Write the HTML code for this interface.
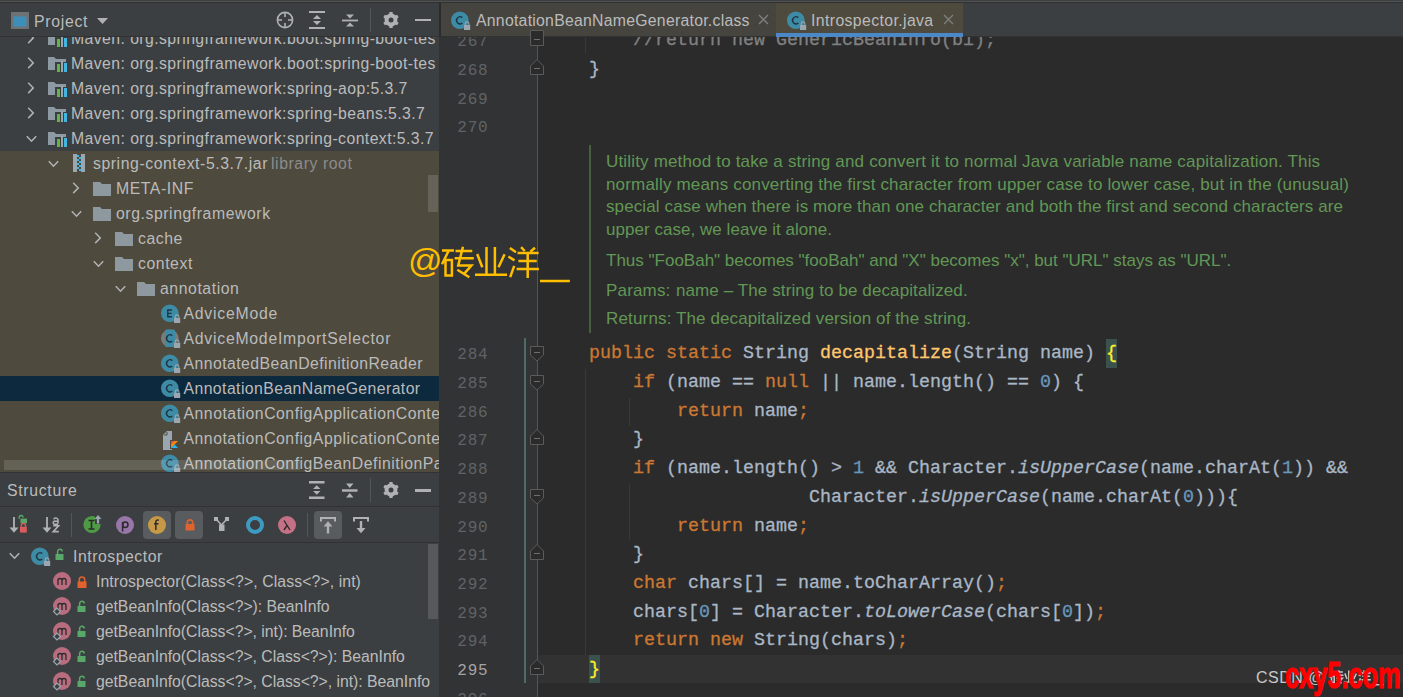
<!DOCTYPE html><html><head><meta charset="utf-8"><style>
*{box-sizing:border-box}
html,body{margin:0;padding:0;width:1403px;height:697px;overflow:hidden;background:#2b2b2b}
body{position:relative;font-family:"Liberation Sans",sans-serif}
.a{position:absolute}
.ui{position:absolute;font-size:15.8px;letter-spacing:0.42px;color:#bbbbbb;white-space:pre;line-height:25px;height:25px}
.code{position:absolute;left:545px;font-family:"Liberation Mono",monospace;font-size:18.333px;-webkit-text-stroke:0.3px currentColor;line-height:28.7px;height:28.7px;white-space:pre;color:#a9b7c6}
.ln{position:absolute;left:441px;width:47.5px;text-align:right;font-family:"Liberation Mono",monospace;font-size:16px;letter-spacing:0.8px;line-height:28.7px;height:28.7px;color:#606366;white-space:pre}
.k{color:#cc7832}.n{color:#6897bb}.f{color:#ffc66d}.i{font-style:italic}
.doc{position:absolute;left:606px;font-size:17px;letter-spacing:0.17px;color:#629755;white-space:pre;line-height:22.6px}
svg{position:absolute;overflow:visible}
</style></head><body><div class="a" style="left:0px;top:0px;width:1403px;height:1px;background:#3c3f41;"></div>
<div class="a" style="left:0px;top:1px;width:1403px;height:1px;background:#525252;"></div>
<div class="a" style="left:0px;top:2px;width:1403px;height:1px;background:#2f3030;"></div>
<div class="a" style="left:0px;top:3px;width:439px;height:469px;background:#3c3f41;"></div>
<div class="a" style="left:0px;top:151px;width:439px;height:321px;background:#4e4a3e;"></div>
<div class="a" style="left:0px;top:376px;width:439px;height:25px;background:#0d293e;"></div>
<div class="a" style="left:0;top:37px;width:439px;height:435px;overflow:hidden">
<svg style="left:27.3px;top:-4.8px" width="8" height="12"><path d="M1.2 0.7 L6.3 5.9 L1.2 11.1" fill="none" stroke="#afb1b3" stroke-width="1.5"/></svg>
<svg style="left:48px;top:-6px" width="20" height="16"><path d="M0 1h6l2 2h10v11H0z" fill="#8e9aa3"/><rect x="7" y="6" width="12" height="10" fill="#3c3f41"/><rect x="9" y="8" width="3" height="8" fill="#62b543"/><rect x="13" y="5" width="2" height="11" fill="#9aa7b0"/><rect x="16" y="7" width="3" height="9" fill="#40b6e0"/></svg>
<div class="ui" style="left:71px;top:-11px;letter-spacing:0.42px">Maven: org.springframework.boot:spring-boot-tes</div>
<svg style="left:27.3px;top:20.2px" width="8" height="12"><path d="M1.2 0.7 L6.3 5.9 L1.2 11.1" fill="none" stroke="#afb1b3" stroke-width="1.5"/></svg>
<svg style="left:48px;top:19px" width="20" height="16"><path d="M0 1h6l2 2h10v11H0z" fill="#8e9aa3"/><rect x="7" y="6" width="12" height="10" fill="#3c3f41"/><rect x="9" y="8" width="3" height="8" fill="#62b543"/><rect x="13" y="5" width="2" height="11" fill="#9aa7b0"/><rect x="16" y="7" width="3" height="9" fill="#40b6e0"/></svg>
<div class="ui" style="left:71px;top:14px;letter-spacing:0.42px">Maven: org.springframework.boot:spring-boot-tes</div>
<svg style="left:27.3px;top:45.2px" width="8" height="12"><path d="M1.2 0.7 L6.3 5.9 L1.2 11.1" fill="none" stroke="#afb1b3" stroke-width="1.5"/></svg>
<svg style="left:48px;top:44px" width="20" height="16"><path d="M0 1h6l2 2h10v11H0z" fill="#8e9aa3"/><rect x="7" y="6" width="12" height="10" fill="#3c3f41"/><rect x="9" y="8" width="3" height="8" fill="#62b543"/><rect x="13" y="5" width="2" height="11" fill="#9aa7b0"/><rect x="16" y="7" width="3" height="9" fill="#40b6e0"/></svg>
<div class="ui" style="left:71px;top:39px;letter-spacing:0.42px">Maven: org.springframework:spring-aop:5.3.7</div>
<svg style="left:27.3px;top:70.2px" width="8" height="12"><path d="M1.2 0.7 L6.3 5.9 L1.2 11.1" fill="none" stroke="#afb1b3" stroke-width="1.5"/></svg>
<svg style="left:48px;top:69px" width="20" height="16"><path d="M0 1h6l2 2h10v11H0z" fill="#8e9aa3"/><rect x="7" y="6" width="12" height="10" fill="#3c3f41"/><rect x="9" y="8" width="3" height="8" fill="#62b543"/><rect x="13" y="5" width="2" height="11" fill="#9aa7b0"/><rect x="16" y="7" width="3" height="9" fill="#40b6e0"/></svg>
<div class="ui" style="left:71px;top:64px;letter-spacing:0.42px">Maven: org.springframework:spring-beans:5.3.7</div>
<svg style="left:26px;top:98px" width="12" height="8"><path d="M0.8 1.2 L5.5 6.2 L10.2 1.2" fill="none" stroke="#afb1b3" stroke-width="1.6"/></svg>
<svg style="left:48px;top:94px" width="20" height="16"><path d="M0 1h6l2 2h10v11H0z" fill="#8e9aa3"/><rect x="7" y="6" width="12" height="10" fill="#3c3f41"/><rect x="9" y="8" width="3" height="8" fill="#62b543"/><rect x="13" y="5" width="2" height="11" fill="#9aa7b0"/><rect x="16" y="7" width="3" height="9" fill="#40b6e0"/></svg>
<div class="ui" style="left:71px;top:89px;letter-spacing:0.42px">Maven: org.springframework:spring-context:5.3.7</div>
<svg style="left:48px;top:123px" width="12" height="8"><path d="M0.8 1.2 L5.5 6.2 L10.2 1.2" fill="none" stroke="#afb1b3" stroke-width="1.6"/></svg>
<svg style="left:72px;top:117px" width="14" height="18"><rect x="1" y="0" width="12" height="18" fill="#9aa7b0"/><rect x="5" y="0" width="4" height="18" fill="#4e4a3e"/><path d="M5 1h2v2H5zM7 3h2v2H7zM5 5h2v2H5zM7 7h2v2H7zM5 9h2v2H5zM7 11h2v2H7zM5 13h2v2H5zM7 15h2v2H7z" fill="#40b6e0"/></svg>
<div class="ui" style="left:93px;top:114px;letter-spacing:0.56px">spring-context-5.3.7.jar</div>
<div class="ui" style="left:271px;top:114px;color:#8c8c8c;letter-spacing:0.56px">library root</div>
<svg style="left:72.3px;top:145.2px" width="8" height="12"><path d="M1.2 0.7 L6.3 5.9 L1.2 11.1" fill="none" stroke="#afb1b3" stroke-width="1.5"/></svg>
<svg style="left:93px;top:144px" width="18" height="15"><path d="M0 1h7l2 2h9v12H0z" fill="#9aa7b0" opacity="0.85"/></svg>
<div class="ui" style="left:116px;top:139px;letter-spacing:0.56px">META-INF</div>
<svg style="left:71px;top:173px" width="12" height="8"><path d="M0.8 1.2 L5.5 6.2 L10.2 1.2" fill="none" stroke="#afb1b3" stroke-width="1.6"/></svg>
<svg style="left:93px;top:169px" width="18" height="15"><path d="M0 1h7l2 2h9v12H0z" fill="#9aa7b0" opacity="0.85"/></svg>
<div class="ui" style="left:116px;top:164px;letter-spacing:0.56px">org.springframework</div>
<svg style="left:94.3px;top:195.2px" width="8" height="12"><path d="M1.2 0.7 L6.3 5.9 L1.2 11.1" fill="none" stroke="#afb1b3" stroke-width="1.5"/></svg>
<svg style="left:115px;top:194px" width="18" height="15"><path d="M0 1h7l2 2h9v12H0z" fill="#9aa7b0" opacity="0.85"/></svg>
<div class="ui" style="left:138px;top:189px;letter-spacing:0.56px">cache</div>
<svg style="left:93px;top:223px" width="12" height="8"><path d="M0.8 1.2 L5.5 6.2 L10.2 1.2" fill="none" stroke="#afb1b3" stroke-width="1.6"/></svg>
<svg style="left:115px;top:219px" width="18" height="15"><path d="M0 1h7l2 2h9v12H0z" fill="#9aa7b0" opacity="0.85"/></svg>
<div class="ui" style="left:138px;top:214px;letter-spacing:0.56px">context</div>
<svg style="left:115px;top:248px" width="12" height="8"><path d="M0.8 1.2 L5.5 6.2 L10.2 1.2" fill="none" stroke="#afb1b3" stroke-width="1.6"/></svg>
<svg style="left:137px;top:244px" width="18" height="15"><path d="M0 1h7l2 2h9v12H0z" fill="#9aa7b0" opacity="0.85"/></svg>
<div class="ui" style="left:160px;top:239px;letter-spacing:0.56px">annotation</div>
<svg style="left:161px;top:267px" width="22" height="20"><circle cx="8.8" cy="9.3" r="8.8" fill="#3e8ba6"/><path d="M11 6H6.8v6.8H11M6.8 9.4h3.8" fill="none" stroke="#1e3542" stroke-width="1.4"/><rect x="13" y="14" width="6.2" height="5" fill="#9aa7b0"/><path d="M14.3 14v-1.3a1.8 1.8 0 0 1 3.6 0V14" fill="none" stroke="#9aa7b0" stroke-width="1.1"/></svg>
<div class="ui" style="left:183.5px;top:264px;letter-spacing:0.76px">AdviceMode</div>
<svg style="left:161px;top:292px" width="22" height="20"><circle cx="8.8" cy="9.3" r="8.8" fill="#8a8d8f" opacity="0.75"/><rect x="4" y="0.5" width="10" height="17.6" rx="1.5" fill="#3e8ba6"/><path d="M11.3 6.6 A3.5 3.5 0 1 0 11.3 12" fill="none" stroke="#1e3542" stroke-width="1.4"/><rect x="13" y="14" width="6.2" height="5" fill="#9aa7b0"/><path d="M14.3 14v-1.3a1.8 1.8 0 0 1 3.6 0V14" fill="none" stroke="#9aa7b0" stroke-width="1.1"/></svg>
<div class="ui" style="left:183.5px;top:289px;letter-spacing:0.75px">AdviceModeImportSelector</div>
<svg style="left:161px;top:317px" width="22" height="20"><circle cx="8.8" cy="9.3" r="8.8" fill="#3e8ba6"/><path d="M11.3 6.6 A3.5 3.5 0 1 0 11.3 12" fill="none" stroke="#1e3542" stroke-width="1.4"/><rect x="13" y="14" width="6.2" height="5" fill="#9aa7b0"/><path d="M14.3 14v-1.3a1.8 1.8 0 0 1 3.6 0V14" fill="none" stroke="#9aa7b0" stroke-width="1.1"/></svg>
<div class="ui" style="left:183.5px;top:314px;letter-spacing:0.44px">AnnotatedBeanDefinitionReader</div>
<svg style="left:161px;top:342px" width="22" height="20"><circle cx="8.8" cy="9.3" r="8.8" fill="#3e8ba6"/><path d="M11.3 6.6 A3.5 3.5 0 1 0 11.3 12" fill="none" stroke="#1e3542" stroke-width="1.4"/><rect x="13" y="14" width="6.2" height="5" fill="#9aa7b0"/><path d="M14.3 14v-1.3a1.8 1.8 0 0 1 3.6 0V14" fill="none" stroke="#9aa7b0" stroke-width="1.1"/></svg>
<div class="ui" style="left:183.5px;top:339px;letter-spacing:0.42px">AnnotationBeanNameGenerator</div>
<svg style="left:161px;top:367px" width="22" height="20"><circle cx="8.8" cy="9.3" r="8.8" fill="#3e8ba6"/><path d="M11.3 6.6 A3.5 3.5 0 1 0 11.3 12" fill="none" stroke="#1e3542" stroke-width="1.4"/><rect x="13" y="14" width="6.2" height="5" fill="#9aa7b0"/><path d="M14.3 14v-1.3a1.8 1.8 0 0 1 3.6 0V14" fill="none" stroke="#9aa7b0" stroke-width="1.1"/></svg>
<div class="ui" style="left:183.5px;top:364px;letter-spacing:0.51px">AnnotationConfigApplicationConte</div>
<svg style="left:163px;top:394px" width="17" height="19"><path d="M0 4l4-4h5v19H0z" fill="#9aa7b0"/><path d="M1 4h3V1" fill="none" stroke="#4e4a3e" stroke-width="1"/><path d="M7 9h9l-4.5 4.5L16 18H7z" fill="#4e4a3e"/><path d="M8 10h7l-7 7z" fill="#f88909"/><path d="M8 17l3.5-3.5L15 17z" fill="#29b6f6"/><path d="M8 10h3.5L8 13.5z" fill="#e44857"/></svg>
<div class="ui" style="left:183.5px;top:389px;letter-spacing:0.51px">AnnotationConfigApplicationConte</div>
<svg style="left:161px;top:417px" width="22" height="20"><circle cx="8.8" cy="9.3" r="8.8" fill="#3e8ba6"/><path d="M11.3 6.6 A3.5 3.5 0 1 0 11.3 12" fill="none" stroke="#1e3542" stroke-width="1.4"/><rect x="13" y="14" width="6.2" height="5" fill="#9aa7b0"/><path d="M14.3 14v-1.3a1.8 1.8 0 0 1 3.6 0V14" fill="none" stroke="#9aa7b0" stroke-width="1.1"/></svg>
<div class="ui" style="left:183.5px;top:414px;letter-spacing:0.51px">AnnotationConfigBeanDefinitionPar</div>
<div class="a" style="left:4px;top:423px;width:296px;height:10px;background:rgba(255,255,255,0.13)"></div>
<div class="a" style="left:428px;top:138px;width:10px;height:37px;background:#65625a"></div>
</div>
<div class="a" style="left:0px;top:3px;width:439px;height:33px;background:#3c3f41;"></div>
<div class="a" style="left:0px;top:36px;width:439px;height:1px;background:#323232;"></div>
<svg style="left:11px;top:12px" width="18" height="17"><rect x="0" y="0" width="18" height="17" fill="#6e7275"/><rect x="2.5" y="4.5" width="13" height="10" fill="#3d8eb9"/></svg>
<div class="ui" style="left:34px;top:9px;color:#bbbbbb;letter-spacing:0.7px">Project</div>
<svg style="left:97px;top:18px" width="11" height="7"><path d="M0 0h11L5.5 6z" fill="#afb1b3"/></svg>
<svg style="left:276px;top:11px" width="18" height="18"><circle cx="9" cy="9" r="7.6" fill="none" stroke="#afb1b3" stroke-width="1.6"/><path d="M9 1v5M9 12v5M1 9h5M12 9h5" stroke="#afb1b3" stroke-width="1.6"/></svg>
<svg style="left:309px;top:11px" width="16" height="18"><path d="M0 1h16M0 17h16" stroke="#afb1b3" stroke-width="1.8"/><path d="M8 4l4 4H4zM8 14l4-4H4z" fill="#afb1b3"/></svg>
<svg style="left:342px;top:12px" width="16" height="17"><path d="M0 8.5h16" stroke="#afb1b3" stroke-width="1.8"/><path d="M8 6.5l4-4H4zM8 10.5l4 4H4z" fill="#afb1b3"/></svg>
<div class="a" style="left:370px;top:8px;width:1px;height:24px;background:#515658;"></div>
<div class="a" style="left:415px;top:19px;width:16px;height:2px;background:#afb1b3;"></div>
<div class="a" style="left:439px;top:3px;width:2px;height:34px;background:#2b2b2b;"></div>
<div class="a" style="left:441px;top:3px;width:962px;height:33px;background:#3c3f41;"></div>
<div class="a" style="left:441px;top:36px;width:962px;height:1px;background:#323232;"></div>
<div class="a" style="left:441px;top:3px;width:335px;height:33px;background:#45443f;"></div>
<div class="a" style="left:776px;top:3px;width:187px;height:33px;background:#4e4a3e;"></div>
<div class="a" style="left:776px;top:33px;width:187px;height:4px;background:#4a88c7;"></div>
<svg style="left:451px;top:11px" width="22" height="20"><circle cx="8.8" cy="9.3" r="8.8" fill="#3e8ba6"/><path d="M11.3 6.6 A3.5 3.5 0 1 0 11.3 12" fill="none" stroke="#1e3542" stroke-width="1.4"/><rect x="13" y="14" width="6.2" height="5" fill="#9aa7b0"/><path d="M14.3 14v-1.3a1.8 1.8 0 0 1 3.6 0V14" fill="none" stroke="#9aa7b0" stroke-width="1.1"/></svg>
<div class="ui" style="left:476px;top:8px;letter-spacing:0.26px">AnnotationBeanNameGenerator.class</div>
<svg style="left:758px;top:14px" width="11" height="11"><path d="M1 1l9 9M10 1l-9 9" stroke="#7d7f81" stroke-width="1.3"/></svg>
<svg style="left:787px;top:11px" width="22" height="20"><circle cx="8.8" cy="9.3" r="8.8" fill="#3e8ba6"/><path d="M11.3 6.6 A3.5 3.5 0 1 0 11.3 12" fill="none" stroke="#1e3542" stroke-width="1.4"/><rect x="13" y="14" width="6.2" height="5" fill="#9aa7b0"/><path d="M14.3 14v-1.3a1.8 1.8 0 0 1 3.6 0V14" fill="none" stroke="#9aa7b0" stroke-width="1.1"/></svg>
<div class="ui" style="left:811px;top:8px;letter-spacing:0.39px">Introspector.java</div>
<svg style="left:942.5px;top:14px" width="11" height="11"><path d="M1 1l9 9M10 1l-9 9" stroke="#7d7f81" stroke-width="1.3"/></svg>
<div class="a" style="left:439px;top:37px;width:98px;height:660px;background:#313335;"></div>
<div class="a" style="left:537px;top:37px;width:1px;height:660px;background:#555555;"></div>
<div class="a" style="left:538px;top:655px;width:865px;height:28px;background:#323232;"></div>
<div class="a" style="left:585px;top:37px;width:1px;height:16px;background:#393939;"></div>
<div class="a" style="left:585px;top:369px;width:1px;height:286px;background:#393939;"></div>
<div class="a" style="left:629px;top:398px;width:1px;height:28px;background:#393939;"></div>
<div class="a" style="left:629px;top:484px;width:1px;height:56px;background:#393939;"></div>
<div class="a" style="left:524px;top:338px;width:2px;height:345px;background:#4f6b66;"></div>
<div class="a" style="left:589px;top:339.3px;width:0px;height:0px;background:#3b514d;"></div>
<div class="a" style="left:1106px;top:339px;width:11px;height:29px;background:#3b514d;"></div>
<div class="a" style="left:589px;top:655px;width:11px;height:28px;background:#3b514d;"></div>
<div class="a" style="left:439px;top:37px;width:964px;height:660px;overflow:hidden">
<div class="ln" style="left:2px;top:-8.70px;color:#606366">267</div>
<div class="code" style="left:106px;top:-9.70px">        <span style="color:#808080">//return new GenericBeanInfo(bi);</span></div>
<div class="ln" style="left:2px;top:20.00px;color:#606366">268</div>
<div class="code" style="left:106px;top:19.00px">    }</div>
<div class="ln" style="left:2px;top:48.70px;color:#606366">269</div>
<div class="ln" style="left:2px;top:77.40px;color:#606366">270</div>
<div class="ln" style="left:2px;top:304.30px;color:#606366">284</div>
<div class="code" style="left:106px;top:303.30px">    <span class="k">public static </span>String <span class="f">decapitalize</span>(String name) <span style="color:#ffef28">{</span></div>
<div class="ln" style="left:2px;top:333.00px;color:#606366">285</div>
<div class="code" style="left:106px;top:332.00px">        <span class="k">if </span>(name == <span class="k">null</span> || name.length() == <span class="n">0</span>) {</div>
<div class="ln" style="left:2px;top:361.70px;color:#606366">286</div>
<div class="code" style="left:106px;top:360.70px">            <span class="k">return </span>name<span class="k">;</span></div>
<div class="ln" style="left:2px;top:390.40px;color:#606366">287</div>
<div class="code" style="left:106px;top:389.40px">        }</div>
<div class="ln" style="left:2px;top:419.10px;color:#606366">288</div>
<div class="code" style="left:106px;top:418.10px">        <span class="k">if </span>(name.length() &gt; <span class="n">1</span> &amp;&amp; Character.<span class="i">isUpperCase</span>(name.charAt(<span class="n">1</span>)) &amp;&amp;</div>
<div class="ln" style="left:2px;top:447.80px;color:#606366">289</div>
<div class="code" style="left:106px;top:446.80px">                        Character.<span class="i">isUpperCase</span>(name.charAt(<span class="n">0</span>))){</div>
<div class="ln" style="left:2px;top:476.50px;color:#606366">290</div>
<div class="code" style="left:106px;top:475.50px">            <span class="k">return </span>name<span class="k">;</span></div>
<div class="ln" style="left:2px;top:505.20px;color:#606366">291</div>
<div class="code" style="left:106px;top:504.20px">        }</div>
<div class="ln" style="left:2px;top:533.90px;color:#606366">292</div>
<div class="code" style="left:106px;top:532.90px">        <span class="k">char </span>chars[] = name.toCharArray()<span class="k">;</span></div>
<div class="ln" style="left:2px;top:562.60px;color:#606366">293</div>
<div class="code" style="left:106px;top:561.60px">        chars[<span class="n">0</span>] = Character.<span class="i">toLowerCase</span>(chars[<span class="n">0</span>])<span class="k">;</span></div>
<div class="ln" style="left:2px;top:591.30px;color:#606366">294</div>
<div class="code" style="left:106px;top:590.30px">        <span class="k">return new </span>String(chars)<span class="k">;</span></div>
<div class="ln" style="left:2px;top:620.00px;color:#a4a3a3">295</div>
<div class="code" style="left:106px;top:619.00px">    <span style="color:#ffef28">}</span></div>
<div class="ln" style="left:2px;top:648.70px;color:#606366">296</div>
</div>
<svg style="left:530px;top:30px" width="14" height="16"><path d="M0.5 0.5h13v15H0.5z" fill="#2b2b2b" stroke="#5b5b5b" stroke-width="1"/><path d="M4 9.5h6" stroke="#6e6e6e" stroke-width="1"/></svg>
<svg style="left:530px;top:59px" width="14" height="16"><path d="M0.5 15.5h13V7L7 0.5 0.5 7z" fill="#2b2b2b" stroke="#5b5b5b" stroke-width="1"/><path d="M4 9.5h6" stroke="#6e6e6e" stroke-width="1"/></svg>
<svg style="left:530px;top:346px" width="14" height="16"><path d="M0.5 0.5h13v8.5L7 15 0.5 9z" fill="#2b2b2b" stroke="#5b5b5b" stroke-width="1"/><path d="M4 6.5h6" stroke="#6e6e6e" stroke-width="1"/></svg>
<svg style="left:530px;top:375px" width="14" height="16"><path d="M0.5 0.5h13v8.5L7 15 0.5 9z" fill="#2b2b2b" stroke="#5b5b5b" stroke-width="1"/><path d="M4 6.5h6" stroke="#6e6e6e" stroke-width="1"/></svg>
<svg style="left:530px;top:429.4px" width="14" height="16"><path d="M0.5 15.5h13V7L7 0.5 0.5 7z" fill="#2b2b2b" stroke="#5b5b5b" stroke-width="1"/><path d="M4 9.5h6" stroke="#6e6e6e" stroke-width="1"/></svg>
<svg style="left:530px;top:488.8px" width="14" height="16"><path d="M0.5 0.5h13v8.5L7 15 0.5 9z" fill="#2b2b2b" stroke="#5b5b5b" stroke-width="1"/><path d="M4 6.5h6" stroke="#6e6e6e" stroke-width="1"/></svg>
<svg style="left:530px;top:544.2px" width="14" height="16"><path d="M0.5 15.5h13V7L7 0.5 0.5 7z" fill="#2b2b2b" stroke="#5b5b5b" stroke-width="1"/><path d="M4 9.5h6" stroke="#6e6e6e" stroke-width="1"/></svg>
<svg style="left:530px;top:659.0px" width="14" height="16"><path d="M0.5 15.5h13V7L7 0.5 0.5 7z" fill="#2b2b2b" stroke="#5b5b5b" stroke-width="1"/><path d="M4 9.5h6" stroke="#6e6e6e" stroke-width="1"/></svg>
<div class="a" style="left:589px;top:145px;width:2px;height:188px;background:#475f3f;"></div>
<div class="doc" style="top:151.0px;letter-spacing:0.17px">Utility method to take a string and convert it to normal Java variable name capitalization. This</div>
<div class="doc" style="top:173.6px;letter-spacing:0.17px">normally means converting the first character from upper case to lower case, but in the (unusual)</div>
<div class="doc" style="top:196.1px;letter-spacing:0.11px">special case when there is more than one character and both the first and second characters are</div>
<div class="doc" style="top:218.7px;letter-spacing:0.04px">upper case, we leave it alone.</div>
<div class="doc" style="top:250.0px;letter-spacing:0.0px">Thus &quot;FooBah&quot; becomes &quot;fooBah&quot; and &quot;X&quot; becomes &quot;x&quot;, but &quot;URL&quot; stays as &quot;URL&quot;.</div>
<div class="doc" style="top:279.9px;letter-spacing:0.17px">Params:</div>
<div class="doc" style="top:307.8px;letter-spacing:0.17px">Returns:</div>
<div class="doc" style="left:676px;top:279.9px;letter-spacing:0.1px">name – The string to be decapitalized.</div>
<div class="doc" style="left:676px;top:307.8px;letter-spacing:0.1px">The decapitalized version of the string.</div>
<div class="a" style="left:0px;top:472px;width:439px;height:225px;background:#3c3f41;"></div>
<div class="a" style="left:0px;top:472px;width:439px;height:1px;background:#323232;"></div>
<div class="ui" style="left:7px;top:478px;letter-spacing:0.7px">Structure</div>
<div class="a" style="left:0px;top:506px;width:439px;height:1px;background:#323232;"></div>
<div class="a" style="left:0px;top:542px;width:439px;height:1px;background:#323232;"></div>
<svg style="left:309px;top:481px" width="16" height="19"><path d="M0 1.3h15.5M0 16.7h15.5" stroke="#afb1b3" stroke-width="2.6"/><path d="M7.75 4.3l3.7 3.7h-7.4zM7.75 13.7l3.7-3.7h-7.4z" fill="#afb1b3"/></svg>
<svg style="left:342px;top:482px" width="16" height="17"><path d="M0 8.5h15.5" stroke="#afb1b3" stroke-width="2.5"/><path d="M7.75 6l3.7-4.4h-7.4zM7.75 11l3.7 4.4h-7.4z" fill="#afb1b3"/></svg>
<div class="a" style="left:370px;top:478px;width:1px;height:24px;background:#515658;"></div>
<svg style="left:383px;top:482px" width="16" height="16"><polygon points="6.19,2.07 6.45,0.05 9.55,0.05 9.81,2.07 12.23,3.47 14.11,2.69 15.66,5.36 14.04,6.61 14.04,9.39 15.66,10.64 14.11,13.31 12.23,12.53 9.81,13.93 9.55,15.95 6.45,15.95 6.19,13.93 3.77,12.53 1.89,13.31 0.34,10.64 1.96,9.39 1.96,6.61 0.34,5.36 1.89,2.69 3.77,3.47" fill="#afb1b3"/><circle cx="8" cy="8" r="6.4" fill="#afb1b3"/><circle cx="8" cy="8" r="2.5" fill="#3c3f41"/></svg>
<svg style="left:383px;top:12px" width="16" height="16"><polygon points="6.19,2.07 6.45,0.05 9.55,0.05 9.81,2.07 12.23,3.47 14.11,2.69 15.66,5.36 14.04,6.61 14.04,9.39 15.66,10.64 14.11,13.31 12.23,12.53 9.81,13.93 9.55,15.95 6.45,15.95 6.19,13.93 3.77,12.53 1.89,13.31 0.34,10.64 1.96,9.39 1.96,6.61 0.34,5.36 1.89,2.69 3.77,3.47" fill="#afb1b3"/><circle cx="8" cy="8" r="6.4" fill="#afb1b3"/><circle cx="8" cy="8" r="2.5" fill="#3c3f41"/></svg>
<div class="a" style="left:415px;top:489px;width:16px;height:2.5px;background:#afb1b3;"></div>
<div class="a" style="left:143px;top:511px;width:28px;height:28px;background:#585c5f;border-radius:4px"></div>
<div class="a" style="left:175px;top:511px;width:28px;height:28px;background:#585c5f;border-radius:4px"></div>
<div class="a" style="left:314px;top:511px;width:28px;height:28px;background:#585c5f;border-radius:4px"></div>
<div class="a" style="left:71px;top:513px;width:1px;height:24px;background:#515658;"></div>
<div class="a" style="left:307px;top:513px;width:1px;height:24px;background:#515658;"></div>
<svg style="left:9px;top:517px" width="10" height="16"><path d="M5 0v12" stroke="#afb1b3" stroke-width="1.8"/><path d="M0.5 10.5h9L5 15.8z" fill="#afb1b3"/></svg>
<svg style="left:17px;top:515px" width="11" height="9"><path d="M2.2 3.8V2.4a1.9 1.9 0 0 1 3.8 0" fill="none" stroke="#59a869" stroke-width="1.4"/><rect x="3.5" y="3.6" width="6.5" height="4.6" fill="#59a869"/></svg>
<svg style="left:19px;top:523px" width="9" height="10"><path d="M2.3 4V2.6a2.1 2.1 0 0 1 4.2 0V4" fill="none" stroke="#db5c5c" stroke-width="1.4"/><rect x="1" y="3.8" width="6.8" height="5.8" fill="#db5c5c"/></svg>
<svg style="left:42px;top:517px" width="10" height="16"><path d="M5 0v12" stroke="#afb1b3" stroke-width="1.8"/><path d="M0.5 10.5h9L5 15.8z" fill="#afb1b3"/></svg>
<svg style="left:52px;top:516px" width="9" height="17"><path d="M1.6 3.2a2.3 2 0 0 1 4.4 0.4V7.8M6 5.2H3.4a1.6 1.6 0 1 0 0 3H6" fill="none" stroke="#afb1b3" stroke-width="1.5"/><path d="M1.2 9.8h5.4L1.2 15.6h5.6" fill="none" stroke="#afb1b3" stroke-width="1.6"/></svg>
<svg style="left:83px;top:514px" width="20" height="20"><circle cx="9" cy="10.5" r="8.6" fill="#4f9a45"/><path d="M5.5 6.5h6M8.5 6.5v8.5M5.5 15h6" stroke="#2b2b2b" stroke-width="1.6" fill="none"/><path d="M12 2h6v8h-6z" fill="#3c3f41"/><path d="M15 9.5V3.5" stroke="#9aa7b0" stroke-width="2.2"/><path d="M11.5 5l3.5-4 3.5 4z" fill="#9aa7b0"/></svg>
<svg style="left:116px;top:516px" width="18" height="18"><circle cx="9" cy="9" r="9" fill="#9876aa"/><path d="M6.6 6v9.5" stroke="#2b2b2b" stroke-width="1.5"/><circle cx="9.3" cy="8.7" r="2.7" fill="none" stroke="#2b2b2b" stroke-width="1.5"/></svg>
<svg style="left:148px;top:516px" width="18" height="18"><circle cx="9" cy="9" r="9" fill="#d9a343" opacity="0.85"/><path d="M10.8 4.3a2 2 0 0 0-3 1.3V14M6 7.8h4.5" fill="none" stroke="#2b2b2b" stroke-width="1.5"/></svg>
<svg style="left:185px;top:519px" width="10" height="12"><path d="M2.3 5.5V3.6a2.7 2.7 0 0 1 5.4 0v1.9" fill="none" stroke="#e0622e" stroke-width="1.6"/><rect x="0.5" y="5" width="9" height="6.5" fill="#e0622e"/></svg>
<svg style="left:214px;top:517px" width="15" height="14"><rect x="0" y="0" width="4" height="4" fill="#afb1b3"/><rect x="11" y="0" width="4" height="4" fill="#afb1b3"/><path d="M2 2l5.5 6M13 2L7.5 8" stroke="#afb1b3" stroke-width="1.6"/><rect x="5" y="7.5" width="5.5" height="6.5" fill="#afb1b3"/></svg>
<svg style="left:246px;top:516px" width="18" height="18"><circle cx="9" cy="9" r="7" fill="none" stroke="#3d9ac1" stroke-width="4"/></svg>
<svg style="left:278px;top:516px" width="18" height="18"><circle cx="9" cy="9" r="9" fill="#c57185"/><path d="M6 4.5l6 9.5M9.3 9L6 14" fill="none" stroke="#2b2b2b" stroke-width="1.4"/></svg>
<svg style="left:320px;top:517px" width="16" height="17"><path d="M1 4.5V1h14v3.5" fill="none" stroke="#afb1b3" stroke-width="2"/><path d="M8 16.5V8" stroke="#afb1b3" stroke-width="2.4"/><path d="M3.5 9.5L8 4.2l4.5 5.3z" fill="#afb1b3"/></svg>
<svg style="left:353px;top:517px" width="16" height="17"><path d="M1 4.5V1h14v3.5" fill="none" stroke="#afb1b3" stroke-width="2"/><path d="M8 4v8" stroke="#afb1b3" stroke-width="2.4"/><path d="M3.5 11L8 16.3l4.5-5.3z" fill="#afb1b3"/></svg>
<div class="a" style="left:0;top:0;width:439px;height:697px;clip-path:inset(543px 0 0 0)">
<svg style="left:9px;top:552px" width="12" height="8"><path d="M0.8 1.2 L5.5 6.2 L10.2 1.2" fill="none" stroke="#afb1b3" stroke-width="1.6"/></svg>
<svg style="left:31px;top:547px" width="22" height="20"><circle cx="8.8" cy="9.3" r="8.8" fill="#3e8ba6"/><path d="M11.3 6.6 A3.5 3.5 0 1 0 11.3 12" fill="none" stroke="#1e3542" stroke-width="1.4"/><rect x="13" y="14" width="6.2" height="5" fill="#9aa7b0"/><path d="M14.3 14v-1.3a1.8 1.8 0 0 1 3.6 0V14" fill="none" stroke="#9aa7b0" stroke-width="1.1"/></svg>
<svg style="left:53px;top:548px" width="12" height="12"><path d="M4.6 6V3.6a2.3 2.3 0 0 1 4.6 0" fill="none" stroke="#59a869" stroke-width="1.5"/><rect x="2.5" y="6" width="8" height="6" fill="#59a869"/></svg>
<div class="ui" style="left:73px;top:544px;letter-spacing:0.53px">Introspector</div>
<svg style="left:53px;top:572px" width="20" height="20"><circle cx="9" cy="9" r="9" fill="#c57185" opacity="0.9"/><path d="M5 13V7.2M5 8.5a2 2 0 0 1 4 0V13M9 8.5a2 2 0 0 1 4 0V13" fill="none" stroke="#2b2b2b" stroke-width="1.3"/></svg>
<svg style="left:77px;top:576px" width="10" height="12"><path d="M2.3 6V3.6a2.7 2.7 0 0 1 5.4 0V6" fill="none" stroke="#e0622e" stroke-width="1.5"/><rect x="0.5" y="5.5" width="9" height="6.5" fill="#e0622e"/></svg>
<div class="ui" style="left:96px;top:569px;letter-spacing:0.09px">Introspector(Class&lt;?&gt;, Class&lt;?&gt;, int)</div>
<svg style="left:53px;top:597px" width="20" height="20"><circle cx="9" cy="9" r="9" fill="#c57185" opacity="0.9"/><path d="M5 13V7.2M5 8.5a2 2 0 0 1 4 0V13M9 8.5a2 2 0 0 1 4 0V13" fill="none" stroke="#2b2b2b" stroke-width="1.3"/><path d="M0.5 14.5l3.5-3.5 3.5 3.5-3.5 3.5z" fill="#3c3f41" stroke="#9aa7b0" stroke-width="1.2"/></svg>
<svg style="left:75px;top:600px" width="12" height="12"><path d="M4.6 6V3.6a2.3 2.3 0 0 1 4.6 0" fill="none" stroke="#59a869" stroke-width="1.5"/><rect x="2.5" y="6" width="8" height="6" fill="#59a869"/></svg>
<div class="ui" style="left:96px;top:594px;letter-spacing:-0.03px">getBeanInfo(Class&lt;?&gt;): BeanInfo</div>
<svg style="left:53px;top:622px" width="20" height="20"><circle cx="9" cy="9" r="9" fill="#c57185" opacity="0.9"/><path d="M5 13V7.2M5 8.5a2 2 0 0 1 4 0V13M9 8.5a2 2 0 0 1 4 0V13" fill="none" stroke="#2b2b2b" stroke-width="1.3"/><path d="M0.5 14.5l3.5-3.5 3.5 3.5-3.5 3.5z" fill="#3c3f41" stroke="#9aa7b0" stroke-width="1.2"/></svg>
<svg style="left:75px;top:625px" width="12" height="12"><path d="M4.6 6V3.6a2.3 2.3 0 0 1 4.6 0" fill="none" stroke="#59a869" stroke-width="1.5"/><rect x="2.5" y="6" width="8" height="6" fill="#59a869"/></svg>
<div class="ui" style="left:96px;top:619px;letter-spacing:-0.03px">getBeanInfo(Class&lt;?&gt;, int): BeanInfo</div>
<svg style="left:53px;top:647px" width="20" height="20"><circle cx="9" cy="9" r="9" fill="#c57185" opacity="0.9"/><path d="M5 13V7.2M5 8.5a2 2 0 0 1 4 0V13M9 8.5a2 2 0 0 1 4 0V13" fill="none" stroke="#2b2b2b" stroke-width="1.3"/><path d="M0.5 14.5l3.5-3.5 3.5 3.5-3.5 3.5z" fill="#3c3f41" stroke="#9aa7b0" stroke-width="1.2"/></svg>
<svg style="left:75px;top:650px" width="12" height="12"><path d="M4.6 6V3.6a2.3 2.3 0 0 1 4.6 0" fill="none" stroke="#59a869" stroke-width="1.5"/><rect x="2.5" y="6" width="8" height="6" fill="#59a869"/></svg>
<div class="ui" style="left:96px;top:644px;letter-spacing:-0.03px">getBeanInfo(Class&lt;?&gt;, Class&lt;?&gt;): BeanInfo</div>
<svg style="left:53px;top:672px" width="20" height="20"><circle cx="9" cy="9" r="9" fill="#c57185" opacity="0.9"/><path d="M5 13V7.2M5 8.5a2 2 0 0 1 4 0V13M9 8.5a2 2 0 0 1 4 0V13" fill="none" stroke="#2b2b2b" stroke-width="1.3"/><path d="M0.5 14.5l3.5-3.5 3.5 3.5-3.5 3.5z" fill="#3c3f41" stroke="#9aa7b0" stroke-width="1.2"/></svg>
<svg style="left:75px;top:675px" width="12" height="12"><path d="M4.6 6V3.6a2.3 2.3 0 0 1 4.6 0" fill="none" stroke="#59a869" stroke-width="1.5"/><rect x="2.5" y="6" width="8" height="6" fill="#59a869"/></svg>
<div class="ui" style="left:96px;top:669px;letter-spacing:-0.03px">getBeanInfo(Class&lt;?&gt;, Class&lt;?&gt;, int): BeanInfo</div>
</div>
<div class="a" style="left:428px;top:544px;width:10px;height:75px;background:#56585a;"></div>
<div class="a" style="left:1256px;top:668px;font:16px/20px 'Liberation Sans';letter-spacing:0.5px;color:#c8c8c8;white-space:pre">CSDN @</div>
<svg style="left:1322px;top:670px" width="70" height="16" viewBox="0 0 130 38"><g fill="none" stroke="#c8c8c8" stroke-width="3.5"><path d="M1 4.4H13M7.5 5L1 18.3M4.5 14H10.9V29.4H4.5z"/><path d="M14.5 5H31.3M13.6 12.3H32.8M22 0.8L17.2 19.5H30.4L23.5 27.3M16.3 23.7L28.3 31.2"/><path d="M45.5 1.1V28.8M53.9 1.1V28.8M36.2 8L41.3 21.3M63.6 8.3L57.5 21.3M34 28.8H66"/><path d="M68.9 2L75 6.2M67.4 10.5L73.5 14.4M73.2 19.8L69.2 31.2M80.1 1.1L83.7 5M94 1.7L89.4 5.6M76.5 7.1H97.6M77.4 15H95.7M75.6 23.1H97.9M86.7 7.1V32.1"/><path d="M99 35H128.9"/></g></svg>
<div class="a" style="left:1285px;top:653.5px;font:bold 37px/44px 'Liberation Sans';color:#ff0000;-webkit-text-stroke:1.2px #ff0000;transform:scaleX(0.685);transform-origin:0 0;white-space:pre">cxy5.com</div>
<div class="a" style="left:408px;top:240px;font:34px/40px 'Liberation Sans';color:#ffbf00">@</div>
<svg style="left:441px;top:246px" width="130" height="38"><g fill="none" stroke="#ffbf00" stroke-width="2.5"><path d="M1 4.4H13M7.5 5L1 18.3M4.5 14H10.9V29.4H4.5z"/><path d="M14.5 5H31.3M13.6 12.3H32.8M22 0.8L17.2 19.5H30.4L23.5 27.3M16.3 23.7L28.3 31.2"/><path d="M45.5 1.1V28.8M53.9 1.1V28.8M36.2 8L41.3 21.3M63.6 8.3L57.5 21.3M34 28.8H66"/><path d="M68.9 2L75 6.2M67.4 10.5L73.5 14.4M73.2 19.8L69.2 31.2M80.1 1.1L83.7 5M94 1.7L89.4 5.6M76.5 7.1H97.6M77.4 15H95.7M75.6 23.1H97.9M86.7 7.1V32.1"/><path d="M99 35H128.9"/></g></svg></body></html>
